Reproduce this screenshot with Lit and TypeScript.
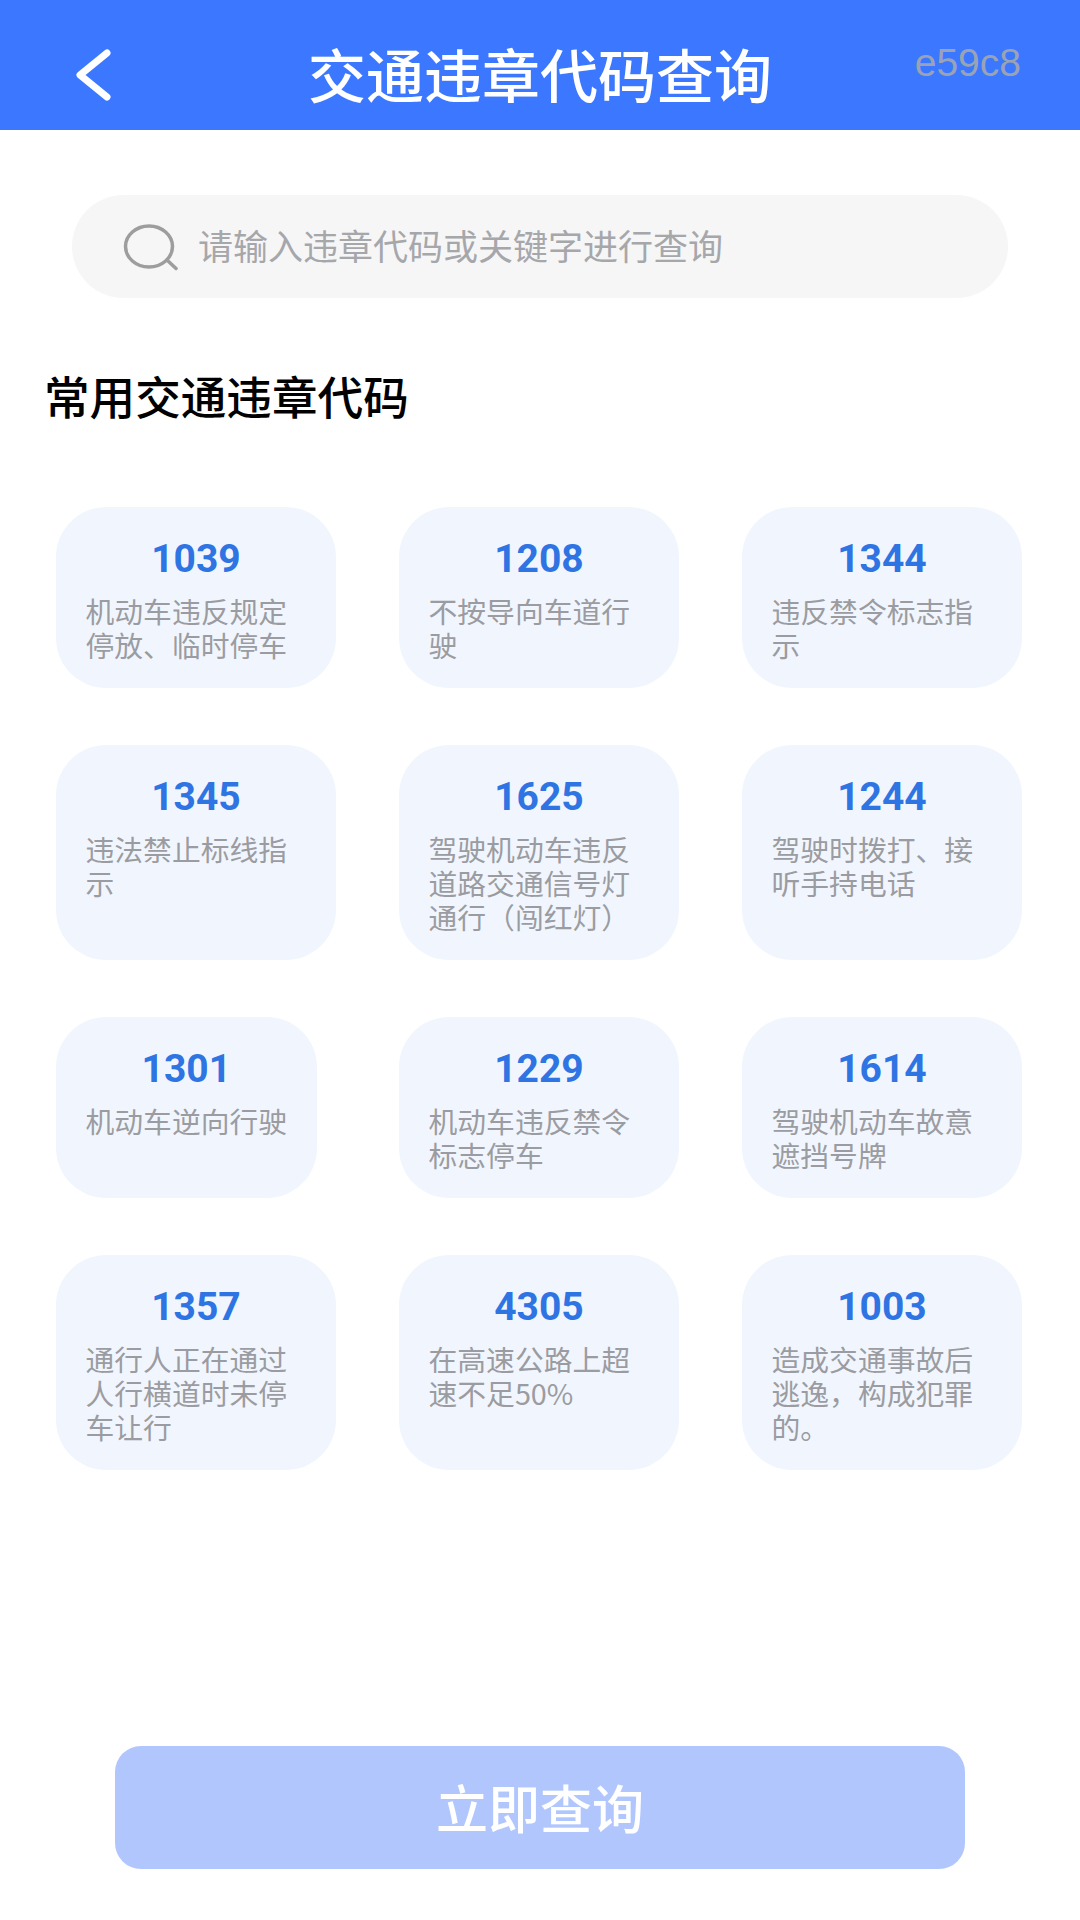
import { LitElement, html, css } from "lit";
import { customElement } from "lit/decorators.js";

const CODES: [string, string][] = [
  ["1039", "机动车违反规定停放、临时停车"],
  ["1208", "不按导向车道行驶"],
  ["1344", "违反禁令标志指示"],
  ["1345", "违法禁止标线指示"],
  ["1625", "驾驶机动车违反道路交通信号灯通行（闯红灯）"],
  ["1244", "驾驶时拨打、接听手持电话"],
  ["1301", "机动车逆向行驶"],
  ["1229", "机动车违反禁令标志停车"],
  ["1614", "驾驶机动车故意遮挡号牌"],
  ["1357", "通行人正在通过人行横道时未停车让行"],
  ["4305", "在高速公路上超速不足50%"],
  ["1003", "造成交通事故后逃逸，构成犯罪的。"],
];

@customElement("app-root")
export class AppRoot extends LitElement {
  static styles = css`
    :host {
      display: flex;
      flex-direction: column;
      width: 1080px;
      height: 1920px;
      background: #fff;
      font-family: "Noto Sans CJK SC", "Noto Sans", sans-serif;
      overflow: hidden;
    }
    .header {
      height: 130px;
      flex: none;
      box-sizing: border-box;
      background: #3b78ff;
      display: grid;
      grid-template-columns: 1fr auto 1fr;
      align-items: center;
      padding: 0 59px;
    }
    .back {
      width: 44px;
      height: 60px;
      display: block;
      margin: 20px 0 0 13px;
    }
    .title {
      color: #fff;
      font-size: 58px;
      font-weight: 500;
      line-height: 70px;
      margin-top: 16px;
      white-space: nowrap;
    }
    .tag {
      justify-self: end;
      color: #9aa3b5;
      font-family: "Liberation Sans", sans-serif;
      font-size: 39px;
      line-height: 44px;
      margin-top: -4px;
    }
    .search {
      flex: none;
      margin: 65px 72px 0 72px;
      height: 103px;
      border-radius: 52px;
      background: #f6f6f7;
      display: flex;
      align-items: center;
      padding-left: 50px;
      gap: 20px;
    }
    .search svg {
      width: 56px;
      height: 48px;
      flex: none;
    }
    .placeholder {
      color: #a6a7ab;
      font-size: 35px;
      line-height: 44px;
      margin-top: -3px;
    }
    h2 {
      flex: none;
      margin: 67px 0 0 44px;
      color: #000;
      font-size: 45.6px;
      font-weight: 500;
      line-height: 60px;
    }
    .grid {
      flex: none;
      margin: 82px 58px 0 56px;
      display: grid;
      grid-template-columns: repeat(3, 280px);
      column-gap: 63px;
      row-gap: 57px;
      justify-items: start;
    }
    .card {
      box-sizing: border-box;
      max-width: 280px;
      padding: 30px 29.5px 26px;
      background: #f1f6fe;
      border-radius: 50px;
    }
    .code {
      text-align: center;
      color: #2f74e3;
      font-family: Roboto, sans-serif;
      font-weight: 700;
      font-size: 39px;
      line-height: 44px;
    }
    .desc {
      margin-top: 13px;
      color: #9b9ca1;
      font-size: 28.8px;
      line-height: 34px;
    }
    .submit {
      flex: none;
      margin: auto 115px 51px;
      height: 123px;
      border-radius: 26px;
      background: #b0c6fd;
      color: #fff;
      font-size: 52px;
      font-weight: 500;
      display: flex;
      align-items: center;
      justify-content: center;
      padding-bottom: 2px;
      box-sizing: border-box;
    }
  `;

  render() {
    return html`
      <div class="header" lang="zh-CN">
        <svg class="back" viewBox="0 0 44 60" fill="none" stroke="#fff" stroke-width="7" stroke-linecap="round" stroke-linejoin="round">
          <path d="M35 8 L8 30 L35 52" />
        </svg>
        <div class="title">交通违章代码查询</div>
        <div class="tag">e59c8</div>
      </div>
      <div class="search" lang="zh-CN">
        <svg viewBox="0 0 56 48" fill="none" stroke="#9d9d9d" stroke-width="3.5">
          <ellipse cx="27" cy="23.5" rx="23.5" ry="20.5" />
          <path d="M45 37 L54 45.5" stroke-linecap="round" />
        </svg>
        <span class="placeholder">请输入违章代码或关键字进行查询</span>
      </div>
      <h2 lang="zh-CN">常用交通违章代码</h2>
      <div class="grid" lang="zh-CN">
        ${CODES.map(
          ([code, desc]) => html`
            <div class="card">
              <div class="code">${code}</div>
              <div class="desc">${desc}</div>
            </div>
          `
        )}
      </div>
      <div class="submit" lang="zh-CN">立即查询</div>
    `;
  }
}
